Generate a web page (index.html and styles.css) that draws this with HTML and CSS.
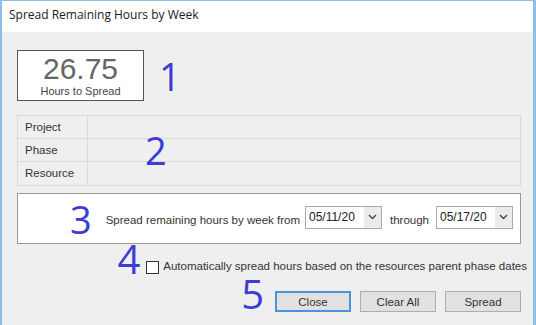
FILE: index.html
```html
<!DOCTYPE html>
<html lang="en">
<head>
    <meta charset="UTF-8">
    <title>Spread Remaining Hours by Week</title>
    <link rel="stylesheet" href="styles.css">
</head>
<body>
    <div class="window">
        <div class="titlebar">Spread Remaining Hours by Week</div>

        <div class="content">
            <div class="hours-row">
                <div class="hours-box">
                    <div class="hours-value">26.75</div>
                    <div class="hours-label">Hours to Spread</div>
                </div>
                <span class="step step-1">1</span>
            </div>

            <div class="info-table">
                <div class="info-row">
                    <div class="info-label">Project</div>
                    <div class="info-value"></div>
                </div>
                <div class="info-row">
                    <div class="info-label">Phase</div>
                    <div class="info-value"></div>
                </div>
                <div class="info-row">
                    <div class="info-label">Resource</div>
                    <div class="info-value"></div>
                </div>
                <span class="step step-2">2</span>
            </div>

            <div class="range-box">
                <span class="step step-3">3</span>
                <span class="range-text">Spread remaining hours by week from</span>
                <div class="date-select">
                    <span class="date-text">05/11/20</span>
                    <span class="date-arrow">
                        <svg width="9" height="6" viewBox="0 0 9 6"><path d="M1 1 L4.5 4.5 L8 1" fill="none" stroke="#444" stroke-width="1.4"/></svg>
                    </span>
                </div>
                <span class="range-text through">through</span>
                <div class="date-select">
                    <span class="date-text">05/17/20</span>
                    <span class="date-arrow">
                        <svg width="9" height="6" viewBox="0 0 9 6"><path d="M1 1 L4.5 4.5 L8 1" fill="none" stroke="#444" stroke-width="1.4"/></svg>
                    </span>
                </div>
            </div>

            <div class="auto-row">
                <span class="step step-4">4</span>
                <span class="checkbox"></span>
                <span class="auto-text">Automatically spread hours based on the resources parent phase dates</span>
            </div>

            <div class="button-row">
                <span class="step step-5">5</span>
                <button class="btn btn-default">Close</button>
                <button class="btn">Clear All</button>
                <button class="btn">Spread</button>
            </div>
        </div>
    </div>
</body>
</html>
```

FILE: styles.css
```css
* {
    margin: 0;
    padding: 0;
    box-sizing: border-box;
}

body {
    font-family: 'Liberation Sans', Arial, sans-serif;
    background: #ffffff;
    width: 536px;
    height: 325px;
    overflow: hidden;
}

.window {
    width: 536px;
    height: 325px;
    border: 2px solid #8fbde9;
    border-top-width: 1px;
    border-right-width: 3px;
    border-bottom: none;
    display: flex;
    flex-direction: column;
}

.titlebar {
    height: 31px;
    background: #ffffff;
    font-family: 'Open Sans', 'Noto Sans', sans-serif;
    font-size: 12px;
    color: #1a1a1a;
    padding: 5px 0 0 7px;
}

.content {
    flex: 1;
    background: #efefef;
    padding: 18px 12px 0 15px;
    display: flex;
    flex-direction: column;
}

.step {
    font-family: 'Open Sans', 'Noto Sans', sans-serif;
    font-size: 38px;
    line-height: 1;
    color: #3d3dd4;
}

/* 1 - hours box */
.hours-row {
    display: flex;
    align-items: center;
}

.hours-box {
    width: 127px;
    height: 51px;
    background: #ffffff;
    border: 1px solid #555555;
    text-align: center;
    color: #666666;
}

.hours-value {
    font-size: 30px;
    line-height: 30px;
    margin-top: 3px;
}

.hours-label {
    font-size: 11px;
    color: #444444;
    margin-top: 1px;
}

.step-1 {
    margin-left: 15px;
}

/* 2 - info table */
.info-table {
    position: relative;
    margin-top: 14px;
    border: 1px solid #d9d9d9;
}

.info-row {
    display: flex;
    height: 23px;
    border-bottom: 1px solid #d9d9d9;
}

.info-row:last-of-type {
    border-bottom: none;
}

.info-label {
    width: 70px;
    border-right: 1px solid #d9d9d9;
    font-size: 11.5px;
    color: #333333;
    padding: 5px 0 0 7px;
}

.info-value {
    flex: 1;
}

.step-2 {
    position: absolute;
    left: 127px;
    top: 15px;
}

/* 3 - date range */
.range-box {
    margin-top: 7px;
    height: 51px;
    background: #ffffff;
    border: 1px solid #9a9a9a;
    display: flex;
    align-items: center;
    justify-content: flex-end;
    padding-right: 7px;
}

.step-3 {
    margin-right: 14px;
    margin-top: 1px;
}

.range-text {
    font-size: 11.5px;
    color: #333333;
    margin-top: 3px;
}

.through {
    margin: 3px 2px 0 8px;
}

.date-select {
    width: 77px;
    height: 23px;
    border: 1px solid #a9a9a9;
    display: flex;
    align-items: center;
    margin-left: 5px;
    margin-top: -3px;
    background: #ffffff;
}

.date-text {
    flex: 1;
    font-size: 12px;
    color: #222222;
    padding-left: 3px;
}

.date-arrow {
    width: 17px;
    height: 21px;
    background: #ececec;
    display: flex;
    align-items: center;
    justify-content: center;
}

/* 4 - auto checkbox */
.auto-row {
    display: flex;
    align-items: flex-start;
    justify-content: flex-end;
    height: 35px;
    margin-top: -5px;
    margin-right: -6px;
}

.step-4 {
    font-size: 40px;
    margin-right: 6px;
}

.checkbox {
    width: 13px;
    height: 13px;
    border: 1px solid #333333;
    background: #ffffff;
    margin-right: 4px;
    margin-top: 22px;
}

.auto-text {
    font-size: 11.5px;
    color: #333333;
    margin-top: 21px;
}

/* 5 - buttons */
.button-row {
    display: flex;
    align-items: flex-start;
    justify-content: flex-end;
    gap: 9px;
}

.step-5 {
    font-size: 40px;
    margin-right: 2px;
}

.btn {
    width: 76px;
    height: 21px;
    font-family: 'Liberation Sans', Arial, sans-serif;
    font-size: 11.5px;
    color: #333333;
    background: #e1e1e1;
    border: 1px solid #adadad;
    margin-top: 17px;
}

.btn-default {
    border: 2px solid #4a95d9;
}
```
